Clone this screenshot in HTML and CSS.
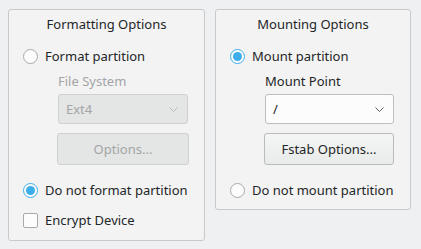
FILE: index.html
```html
<!DOCTYPE html>
<html lang="en">
<head>
    <meta charset="UTF-8">
    <title>Partition Options</title>
    <link rel="stylesheet" href="styles.css">
</head>
<body>
    <div class="panel">
        <div class="group group-format">
            <div class="group-title">Formatting Options</div>
            <label class="option first">
                <span class="radio"></span>
                <span>Format partition</span>
            </label>
            <div class="sub disabled">
                <div class="field-label">File System</div>
                <div class="combo">
                    <span>Ext4</span>
                    <svg class="chevron" width="9" height="5" viewBox="0 0 9 5"><path d="M0.5 0.5 L4.5 4.5 L8.5 0.5" fill="none" stroke="currentColor" stroke-width="1"/></svg>
                </div>
                <div class="button">Options...</div>
            </div>
            <label class="option after-sub">
                <span class="radio checked"></span>
                <span>Do not format partition</span>
            </label>
            <label class="option check-row">
                <span class="checkbox"></span>
                <span>Encrypt Device</span>
            </label>
        </div>

        <div class="group group-mount">
            <div class="group-title">Mounting Options</div>
            <label class="option first">
                <span class="radio checked"></span>
                <span>Mount partition</span>
            </label>
            <div class="sub">
                <div class="field-label">Mount Point</div>
                <div class="combo">
                    <span>/</span>
                    <svg class="chevron" width="9" height="5" viewBox="0 0 9 5"><path d="M0.5 0.5 L4.5 4.5 L8.5 0.5" fill="none" stroke="currentColor" stroke-width="1"/></svg>
                </div>
                <div class="button">Fstab Options...</div>
            </div>
            <label class="option after-sub">
                <span class="radio"></span>
                <span>Do not mount partition</span>
            </label>
        </div>
    </div>
</body>
</html>
```

FILE: styles.css
```css
body {
    margin: 0;
    background: #eff0f1;
    font-family: 'Noto Sans', sans-serif;
    font-size: 13px;
    color: #232627;
}
.panel {
    display: flex;
    align-items: flex-start;
    gap: 10px;
    padding: 9px 8px;
}
.group {
    box-sizing: border-box;
    border: 1px solid #c8c9ca;
    border-radius: 3px;
    background: #f3f3f4;
    padding: 5px 14px 9px 14px;
}
.group-format {
    width: 197px;
    height: 232px;
}
.group-mount {
    width: 196px;
    height: 201px;
}
.group-title {
    text-align: center;
    height: 18px;
    line-height: 18px;
}
.option {
    display: flex;
    align-items: center;
    gap: 7px;
    height: 20px;
    line-height: 20px;
}
.option.first {
    margin-top: 13px;
}
.option.after-sub {
    margin-top: 15px;
}
.option.check-row {
    margin-top: 10px;
}
.radio {
    box-sizing: border-box;
    width: 15px;
    height: 15px;
    border: 1px solid #a8a9aa;
    border-radius: 50%;
    background: #fcfcfc;
    position: relative;
    flex-shrink: 0;
}
.radio.checked {
    border-color: #3daee9;
    background: #fcfcfc;
}
.radio.checked::after {
    content: "";
    position: absolute;
    left: 2px;
    top: 2px;
    width: 9px;
    height: 9px;
    border-radius: 50%;
    background: #3daee9;
}
.checkbox {
    box-sizing: border-box;
    width: 15px;
    height: 15px;
    border: 1px solid #a8a9aa;
    border-radius: 2px;
    background: #fcfcfc;
    flex-shrink: 0;
}
.sub {
    margin-left: 35px;
}
.field-label {
    margin-top: 6px;
    height: 18px;
    line-height: 18px;
}
.combo {
    box-sizing: border-box;
    margin-top: 4px;
    width: 129px;
    height: 30px;
    border: 1px solid #bcbebf;
    border-radius: 3px;
    background: #fcfcfc;
    display: flex;
    align-items: center;
    justify-content: space-between;
    padding: 0 9px 0 7px;
}
.chevron {
    color: #5d6061;
}
.button {
    box-sizing: border-box;
    margin-top: 9px;
    margin-left: -1px;
    width: 130px;
    height: 32px;
    border: 1px solid #b9bbbc;
    border-radius: 3px;
    background: linear-gradient(#f4f5f5, #e9eaea);
    text-align: center;
    line-height: 30px;
}
.disabled {
    color: #a3a5a6;
}
.disabled .combo {
    background: #e4e5e5;
    border-color: #cfd0d1;
    width: 130px;
}
.disabled .chevron {
    color: #b6b8b9;
}
.disabled .button {
    background: #e4e5e5;
    border-color: #cfd0d1;
    width: 132px;
}
```
